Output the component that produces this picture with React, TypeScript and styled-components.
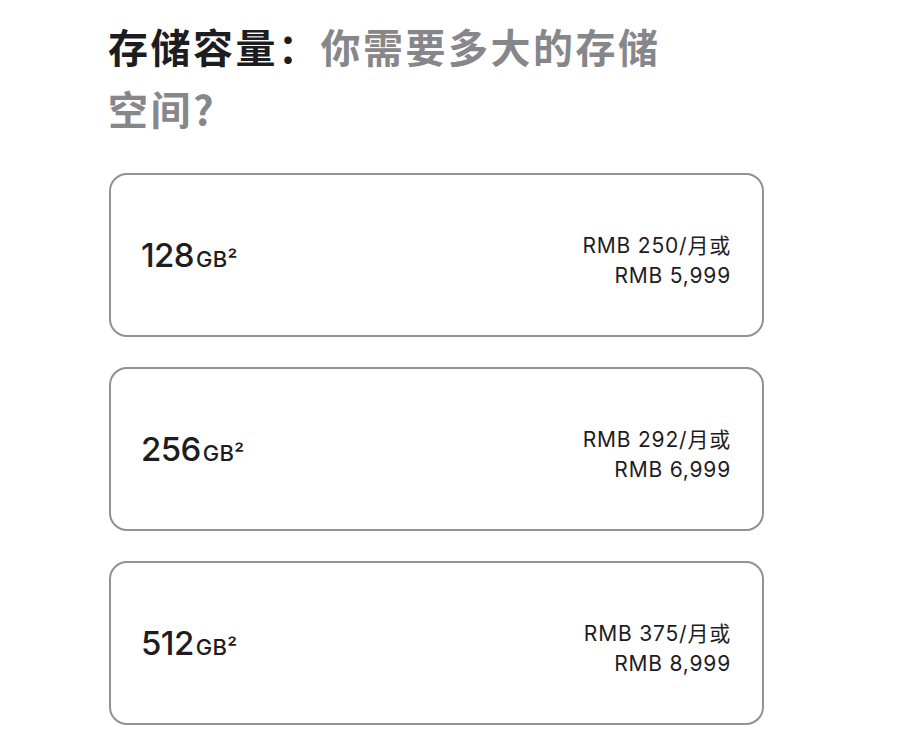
import React from 'react'
import styled, { createGlobalStyle } from 'styled-components'

const GlobalStyle = createGlobalStyle`
  html, body {
    margin: 0;
    padding: 0;
    background: #fff;
  }
  body {
    font-family: Inter, "Noto Sans CJK SC", sans-serif;
    color: #1d1d1f;
  }
`

const Page = styled.div({
  padding: '15px 144px 0 108px',
  display: 'flex',
  flexDirection: 'column',
})

const Heading = styled.h2({
  margin: 0,
  maxWidth: 580,
  fontFamily: '"Noto Sans CJK SC", sans-serif',
  fontSize: 40,
  lineHeight: '62px',
  letterSpacing: '2.5px',
  fontWeight: 700,
  color: '#1d1d1f',
})

const Muted = styled.span({
  color: '#86868b',
  fontWeight: 600,
})

const OptionList = styled.div({
  marginTop: 34,
  display: 'flex',
  flexDirection: 'column',
  gap: 30,
  paddingLeft: 1,
})

const Option = styled.button({
  boxSizing: 'border-box',
  height: 164,
  width: 655,
  display: 'flex',
  alignItems: 'center',
  justifyContent: 'space-between',
  padding: '0 31px 0 30px',
  background: '#fff',
  border: '2px solid #919196',
  borderRadius: 18,
  fontFamily: 'inherit',
  color: '#1d1d1f',
  cursor: 'pointer',
  textAlign: 'left',
})

const Capacity = styled.span({
  fontSize: 33,
  fontWeight: 500,
  letterSpacing: '-0.6px',
  lineHeight: 1,
})

const Unit = styled.span({
  fontSize: 22,
  fontWeight: 500,
  letterSpacing: '0.3px',
  marginLeft: 2,
})

const Price = styled.span({
  fontSize: 21,
  lineHeight: '30px',
  letterSpacing: '0.8px',
  textAlign: 'right',
  fontWeight: 400,
  paddingTop: 12,
})

const options = [
  { size: '128', monthly: '250', full: '5,999' },
  { size: '256', monthly: '292', full: '6,999' },
  { size: '512', monthly: '375', full: '8,999' },
]

const App = () => (
  <>
    <GlobalStyle />
    <Page>
      <Heading>
        存储容量：<Muted>你需要多大的存储空间?</Muted>
      </Heading>
      <OptionList>
        {options.map(o => (
          <Option key={o.size}>
            <Capacity>
              {o.size}
              <Unit>GB²</Unit>
            </Capacity>
            <Price>
              RMB {o.monthly}/月或
              <br />
              RMB {o.full}
            </Price>
          </Option>
        ))}
      </OptionList>
    </Page>
  </>
)

export default App
